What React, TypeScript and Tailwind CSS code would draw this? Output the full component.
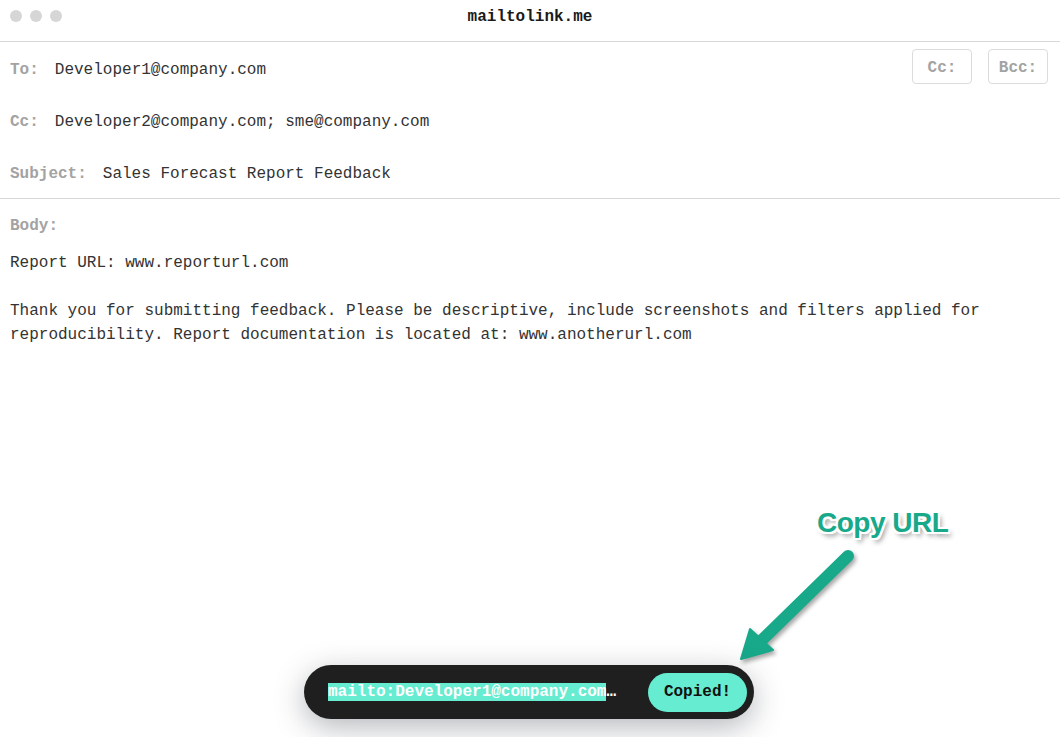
import React from 'react'

const mono = { fontFamily: '"Liberation Mono", "DejaVu Sans Mono", monospace' }

function Field({ label, value, children }: { label: string; value: string; children?: React.ReactNode }) {
  return (
    <div className="h-[52px] flex items-center px-[10px] pt-[4px]">
      <span className="text-[16px] font-bold text-[#a3a3a3]">{label}</span>
      <span className="ml-4 text-[16px] text-[#333]">{value}</span>
      {children}
    </div>
  )
}

export default function App() {
  return (
    <div className="relative w-[1060px] h-[737px] bg-white overflow-hidden" style={mono}>
      {/* Title bar */}
      <div className="relative h-[42px] border-b border-[#d9d9d9]">
        <div className="flex gap-2 pl-[10px] pt-[10px]">
          <span className="w-3 h-3 rounded-full bg-[#d6d6d6]" />
          <span className="w-3 h-3 rounded-full bg-[#d6d6d6]" />
          <span className="w-3 h-3 rounded-full bg-[#d6d6d6]" />
        </div>
        <div className="absolute inset-x-0 top-[5px] text-center text-[16px] font-bold text-[#1a1a1a] leading-6">
          mailtolink.me
        </div>
      </div>

      {/* Header fields */}
      <div className="border-b border-[#d9d9d9]">
        <Field label="To:" value="Developer1@company.com">
          <div className="ml-auto flex gap-4 -mt-[7px] pr-[2px]">
            <button className="w-[60px] h-[35px] pt-[2px] border border-[#dcdcdc] rounded text-[16px] font-bold text-[#a3a3a3]">Cc:</button>
            <button className="w-[60px] h-[35px] pt-[2px] border border-[#dcdcdc] rounded text-[16px] font-bold text-[#a3a3a3]">Bcc:</button>
          </div>
        </Field>
        <Field label="Cc:" value="Developer2@company.com; sme@company.com" />
        <Field label="Subject:" value="Sales Forecast Report Feedback" />
      </div>

      {/* Body */}
      <div className="px-[10px] pt-[15px]">
        <div className="text-[16px] leading-6 font-bold text-[#a3a3a3]">Body:</div>
        <div className="mt-[13px] text-[16px] leading-6 text-[#333] whitespace-pre-wrap">
          {'Report URL: www.reporturl.com\n\nThank you for submitting feedback. Please be descriptive, include screenshots and filters applied for\nreproducibility. Report documentation is located at: www.anotherurl.com'}
        </div>
      </div>

      {/* Annotation */}
      <div
        className="absolute left-[817px] top-[503px] text-[28px] font-bold leading-10 text-[#17a98a] tracking-[-0.5px]"
        style={{
          fontFamily: '"Liberation Sans", Arial, sans-serif',
          textShadow:
            '-2px -2px 0 #fff, 2px -2px 0 #fff, -2px 2px 0 #fff, 2px 2px 0 #fff, 0 2px 0 #fff, 0 -2px 0 #fff, 2px 0 0 #fff, -2px 0 0 #fff, 3px 4px 5px rgba(0,0,0,0.45)',
        }}
      >
        Copy URL
      </div>
      <svg
        className="absolute left-0 top-0 drop-shadow-[2px_3px_2px_rgba(0,0,0,0.35)]"
        width="1060"
        height="737"
        viewBox="0 0 1060 737"
      >
        <line x1="848" y1="556" x2="762" y2="640" stroke="#17a98a" strokeWidth="12" strokeLinecap="round" />
        <polygon points="741,659 750,629 773,650" fill="#17a98a" stroke="#17a98a" strokeWidth="2" strokeLinejoin="round" />
      </svg>

      {/* Copy bar */}
      <div className="absolute left-[304px] top-[665px] w-[450px] h-[54px] rounded-full bg-[#1f1f1f] flex items-center pl-6 pr-[7px] shadow-[0_8px_30px_rgba(40,50,60,0.35)]">
        <span className="text-[16px] font-bold text-white leading-[23px] whitespace-nowrap">
          <span className="bg-[#66ecd0]">mailto:Developer1@company.com</span>…
        </span>
        <button className="ml-auto w-[99px] h-[39px] rounded-full bg-[#66ecd0] text-[16px] font-bold text-[#111]">
          Copied!
        </button>
      </div>
    </div>
  )
}
